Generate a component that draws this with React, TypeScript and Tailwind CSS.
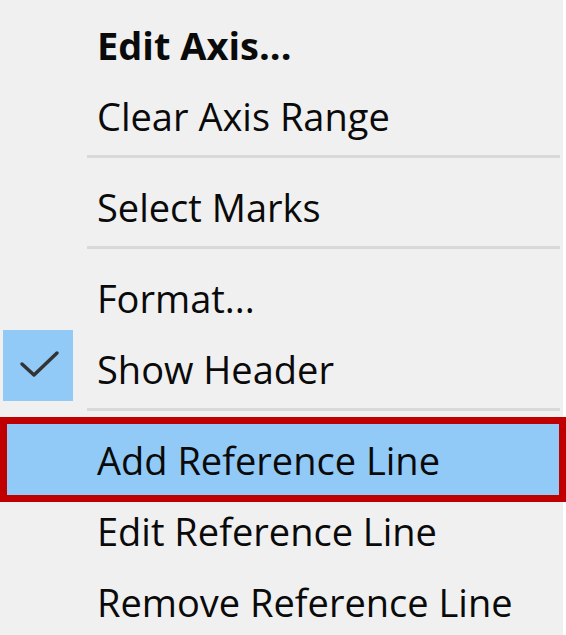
type Entry =
  | { kind: "item"; label: string; bold?: boolean; checked?: boolean; active?: boolean }
  | { kind: "sep" };

const entries: Entry[] = [
  { kind: "item", label: "Edit Axis...", bold: true },
  { kind: "item", label: "Clear Axis Range" },
  { kind: "sep" },
  { kind: "item", label: "Select Marks" },
  { kind: "sep" },
  { kind: "item", label: "Format..." },
  { kind: "item", label: "Show Header", checked: true },
  { kind: "sep" },
  { kind: "item", label: "Add Reference Line", active: true },
  { kind: "item", label: "Edit Reference Line" },
  { kind: "item", label: "Remove Reference Line" },
];

function CheckMark() {
  return (
    <svg width="70" height="71" viewBox="0 0 70 71" fill="none">
      <path
        d="M19 34 L31 45 L54 23"
        stroke="#333"
        strokeWidth="3.5"
        strokeLinecap="round"
        strokeLinejoin="round"
      />
    </svg>
  );
}

export default function App() {
  return (
    <div className="h-[635px] w-[566px] overflow-hidden bg-white">
      <div
        className="h-full w-[563px] bg-[#f0f0f0] pt-[9px] text-[#0a0a0a]"
        style={{ fontFamily: '"Open Sans", "Noto Sans", sans-serif' }}
      >
        {entries.map((e, i) => {
          if (e.kind === "sep") {
            return (
              <div key={i} className="h-[20px] pt-[4px] pl-[87px] pr-[3px]">
                <div className="h-[3px] bg-[#d9d9d9]" />
              </div>
            );
          }
          return (
            <div
              key={i}
              className={`relative flex h-[71px] items-center ${e.active ? "bg-[#91c9f7]" : ""}`}
            >
              <div className="flex w-[97px] items-center pl-[3px]">
                {e.checked && (
                  <div className="-mt-[6px] h-[71px] w-[70px] bg-[#91c9f7]">
                    <CheckMark />
                  </div>
                )}
              </div>
              <span className={`text-[38px] leading-none ${e.bold ? "font-bold" : ""}`}>{e.label}</span>
              {e.active && (
                <div className="absolute -top-[7px] -bottom-[7px] left-0 -right-[3px] border-[7px] border-[#c00000]" />
              )}
            </div>
          );
        })}
      </div>
    </div>
  );
}
